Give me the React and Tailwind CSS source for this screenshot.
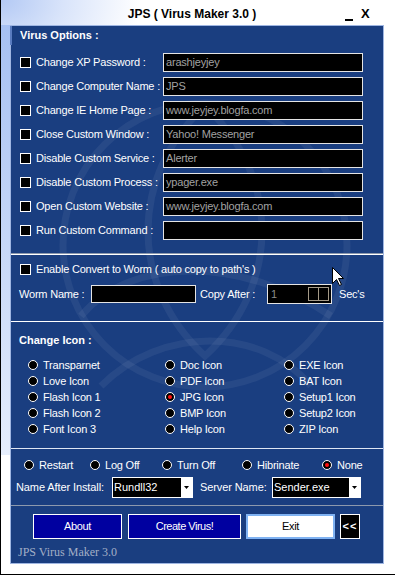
import React from "react";

const Check = () => (
  <span className="block w-[11px] h-[11px] bg-black border border-white shrink-0" />
);

const Radio = ({ on }) => (
  <span className="flex w-[10px] h-[10px] rounded-full bg-black border border-white items-center justify-center shrink-0">
    {on && <span className="block w-[4px] h-[4px] rounded-full bg-[#ff1010]" />}
  </span>
);

const Field = ({ value, w = "w-[200px]", h = "h-[19px]" }) => (
  <div className={`${w} ${h} bg-black border border-[#e4e4e4] text-[#a2a2a2] pl-[2px] flex items-center leading-none shrink-0`}>
    {value}
  </div>
);

const Select = ({ value, w }) => (
  <div className={`${w} h-[21px] flex border border-white bg-black shrink-0`}>
    <div className="flex-1 flex items-center pl-[1px] text-white tracking-normal leading-none">{value}</div>
    <div className="w-[11px] bg-white flex items-center justify-center">
      <svg width="6" height="3" viewBox="0 0 6 3">
        <path d="M0 0 H5 L2.5 3 Z" fill="#000" />
      </svg>
    </div>
  </div>
);

const rows = [
  ["Change XP Password :", "arashjeyjey"],
  ["Change Computer Name :", "JPS"],
  ["Change IE Home Page :", "www.jeyjey.blogfa.com"],
  ["Close Custom Window :", "Yahoo! Messenger"],
  ["Disable Custom Service :", "Alerter"],
  ["Disable Custom Process :", "ypager.exe"],
  ["Open Custom Website :", "www.jeyjey.blogfa.com"],
  ["Run Custom Command :", ""],
];

const icons = [
  ["Transparnet", "Doc Icon", "EXE Icon"],
  ["Love Icon", "PDF Icon", "BAT Icon"],
  ["Flash Icon 1", "JPG Icon", "Setup1 Icon"],
  ["Flash Icon 2", "BMP Icon", "Setup2 Icon"],
  ["Font Icon 3", "Help Icon", "ZIP Icon"],
];

export default function App() {
  return (
    <div className="relative w-[395px] h-[575px] overflow-hidden bg-white bg-[radial-gradient(ellipse_140px_100px_at_0%_0%,#b3c9f4_0%,#d9e4fa_45%,#ffffff_100%)] border-l border-b border-black font-['Liberation_Sans',Arial,sans-serif] text-[11px] tracking-[-0.2px] flex flex-col">
      {/* left edge glow */}
      <div className="absolute left-0 top-[25px] w-[9px] h-[430px] bg-[linear-gradient(to_bottom,#a6c0f2,#e6eefc)]" />

      {/* title bar */}
      <div className="relative h-[25px] shrink-0 flex items-center justify-center">
        <span className="font-bold text-[12px] tracking-normal text-black pr-[12px] pt-[2px]">JPS ( Virus Maker 3.0 )</span>
        <span className="absolute left-[344px] top-[19px] block w-[8px] h-[2px] bg-black" />
        <span className="absolute left-[360px] top-[7px] font-bold text-[13px] text-black leading-none">X</span>
      </div>

      {/* main panel */}
      <div className="relative ml-[9px] w-[374px] h-[539px] border border-[#9fb6e2] bg-[#1a3e80] text-white flex flex-col">
        <svg className="absolute inset-0 pointer-events-none" width="372" height="537" viewBox="0 0 372 537">
          <g fill="none" stroke="#ffffff" strokeOpacity="0.06" strokeWidth="7">
            <circle cx="194" cy="219" r="142" />
            <path d="M194 80 C 270 150, 270 260, 194 330 C 118 260, 118 150, 194 80 Z" />
            <path d="M70 290 C 120 230, 230 230, 320 290" />
            <path d="M90 360 C 150 300, 250 300, 300 360" />
          </g>
        </svg>

        {/* Section 1 */}
        <div className="relative border-b border-[#8d99ad] pb-[13px]">
          <div className="h-[19px] flex items-center pl-[8px] font-bold text-[11px] tracking-normal border-l-2 border-[#5a7cc0] -ml-[1px]">
            Virus Options :
          </div>
          <div className="mt-[8px] flex flex-col gap-[5px]">
            {rows.map(([label, value]) => (
              <div key={label} className="h-[19px] flex items-center pl-[9px]">
                <Check />
                <span className="ml-[5px] w-[127px] whitespace-nowrap">{label}</span>
                <Field value={value} />
              </div>
            ))}
          </div>
        </div>

        {/* Section 2 */}
        <div className="relative border-t border-white pt-[7px] pb-[17px]">
          <div className="h-[14px] flex items-center pl-[9px]">
            <Check />
            <span className="ml-[5px] whitespace-nowrap">Enable Convert to Worm ( auto copy to path's )</span>
          </div>
          <div className="mt-[8px] h-[20px] flex items-center pl-[8px]">
            <span className="w-[72px] whitespace-nowrap">Worm Name :</span>
            <Field value="" w="w-[105px]" h="h-[18px]" />
            <span className="ml-[4px] w-[67px] whitespace-nowrap">Copy After :</span>
            <div className="w-[65px] h-[20px] bg-black border border-[#e4e4e4] flex items-center pl-[3px] pr-[2px] shrink-0">
              <span className="flex-1 text-[#8c8c8c] leading-none">1</span>
              <div className="flex h-[14px]">
                <span className="block w-[11px] h-[14px] border border-[#a49a88]" />
                <span className="block w-[10px] h-[14px] border border-l-0 border-[#a49a88]" />
              </div>
            </div>
            <span className="ml-[7px] whitespace-nowrap">Sec's</span>
          </div>
        </div>

        {/* Section 3 */}
        <div className="relative border-t border-white pt-[11px] pb-[11px]">
          <div className="h-[14px] flex items-center pl-[8px] font-bold tracking-normal">Change Icon :</div>
          <div className="mt-[10px] grid grid-cols-[137px_119px_1fr] pl-[17px]">
            {icons.flat().map((name) => (
              <div key={name} className="h-[16px] flex items-center">
                <Radio on={name === "JPG Icon"} />
                <span className="ml-[5px] whitespace-nowrap">{name}</span>
              </div>
            ))}
          </div>
        </div>

        {/* Section 4 */}
        <div className="relative border-t border-[#dfe6f3] border-b border-b-[#8d99ad] pt-[8px] pb-[7px]">
          <div className="h-[16px] flex items-center pl-[13px]">
            {[
              ["Restart", "w-[66px]"],
              ["Log Off", "w-[72px]"],
              ["Turn Off", "w-[80px]"],
              ["Hibrinate", "w-[80px]"],
              ["None", ""],
            ].map(([t, w]) => (
              <div key={t} className={`${w} flex items-center shrink-0`}>
                <Radio on={t === "None"} />
                <span className="ml-[5px] whitespace-nowrap">{t}</span>
              </div>
            ))}
          </div>
          <div className="mt-[4px] h-[21px] flex items-center pl-[5px]">
            <span className="w-[96px] whitespace-nowrap tracking-[-0.1px]">Name After Install:</span>
            <Select value="Rundll32" w="w-[81px]" />
            <span className="ml-[7px] w-[72px] whitespace-nowrap tracking-[-0.1px]">Server Name:</span>
            <Select value="Sender.exe" w="w-[89px]" />
          </div>
        </div>

        {/* Section 5 */}
        <div className="relative flex-1 pt-[8px]">
          <div className="flex h-[25px] pl-[22px]">
            <button className="w-[89px] h-[25px] bg-[#0000a0] border border-white text-white tracking-[-0.3px]">About</button>
            <button className="ml-[6px] w-[113px] h-[25px] bg-[#0000a0] border border-white text-white tracking-[-0.5px]">Create Virus!</button>
            <button className="ml-[5px] w-[89px] h-[25px] bg-white border-2 border-[#7fb2f2] text-black tracking-[-0.3px]">Exit</button>
            <button className="ml-[5px] w-[20px] h-[25px] bg-black border border-white text-white font-bold tracking-[1px] text-[11px] leading-none">&lt;&lt;</button>
          </div>
          <div className="mt-[6px] h-[14px] flex items-center pl-[7px] font-['Liberation_Serif',serif] text-[12px] tracking-normal text-[#a3afc6]">
            JPS Virus Maker 3.0
          </div>
        </div>
      </div>

      {/* mouse cursor */}
      <svg className="absolute left-[331px] top-[267px]" width="13" height="20" viewBox="0 0 13 20">
        <path d="M0.5 0.5 L0.5 16.5 L4.5 12.5 L7.5 18.5 L9.5 17.5 L6.5 11.5 L11.5 11.5 Z" fill="#fff" stroke="#000" strokeWidth="1" />
      </svg>
    </div>
  );
}
